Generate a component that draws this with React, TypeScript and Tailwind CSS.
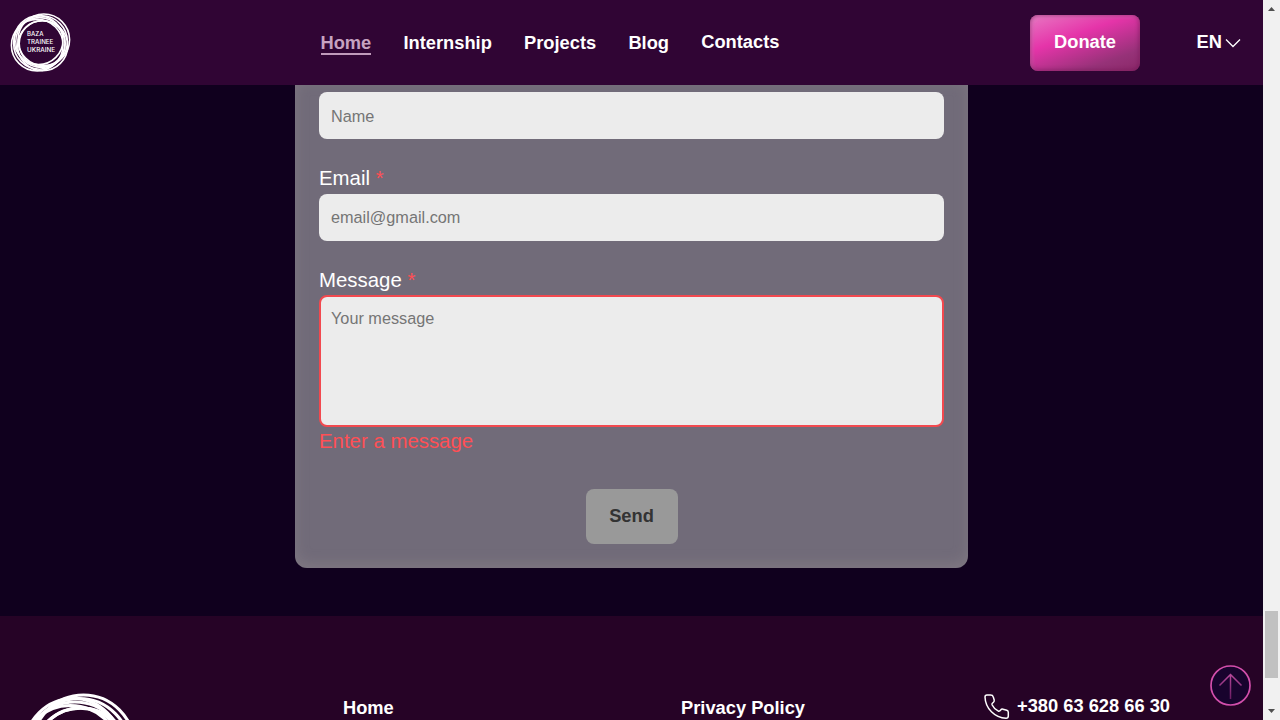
import type { ReactNode } from "react";

const rings = [
  { cx: 55.4, cy: 45.6, r: 42.3 },
  { cx: 51.8, cy: 48.5, r: 42.3 },
  { cx: 48.2, cy: 51.5, r: 42.3 },
  { cx: 44.6, cy: 54.4, r: 42.3 },
  { cx: 53.6, cy: 55.2, r: 41 },
  { cx: 52.6, cy: 51.8, r: 37.5 },
  { cx: 46.8, cy: 46.2, r: 40 },
];

function Logo({ className, wordmark = true }: { className: string; wordmark?: boolean }) {
  return (
    <svg viewBox="0 0 100 100" className={className} fill="none" stroke="#fff">
      {rings.map((ring, i) => (
        <circle key={i} {...ring} strokeWidth="2.6" />
      ))}
      {wordmark && (
        <g fill="#fff" stroke="none" fontSize="10" fontWeight="500" fontFamily="Inter, sans-serif">
          <text x="28" y="40" textLength="27" lengthAdjust="spacingAndGlyphs">BAZA</text>
          <text x="28" y="53" textLength="43" lengthAdjust="spacingAndGlyphs">TRAINEE</text>
          <text x="28" y="66" textLength="46" lengthAdjust="spacingAndGlyphs">UKRAINE</text>
        </g>
      )}
    </svg>
  );
}

function Label({ children }: { children: ReactNode }) {
  return (
    <label className="block h-[31px] text-[20.4px] leading-[31px] text-white">
      {children} <span className="text-[#ff4f55]">*</span>
    </label>
  );
}

function Header() {
  return (
    <header className="flex h-[85px] shrink-0 items-center bg-[#300534] text-[18.3px] font-bold text-white">
      <Logo className="ml-[10px] h-[61px] w-[61px] shrink-0" />
      <nav className="ml-[249.5px] flex w-[600.5px] gap-[32.2px] pt-[2px] leading-[22px]">
        <a className="h-[23px] border-b-2 border-[#c09bbb] text-[#c7a3c1]">Home</a>
        <a>Internship</a>
        <a>Projects</a>
        <a>Blog</a>
        <a className="-mt-px">Contacts</a>
      </nav>
      <button className="ml-[109px] h-[56px] w-[110px] shrink-0 rounded-[8px] bg-[linear-gradient(160deg,#e878c3_0%,#e534a9_38%,#963278_78%,#8a2868_100%)] pb-[2px] shadow-[inset_0_0_4px_1px_rgba(110,15,80,0.6),inset_2px_2px_4px_rgba(255,180,230,0.4)]">
        Donate
      </button>
      <div className="ml-[56.5px] flex items-center gap-[3.5px] pb-[2px]">
        EN
        <svg className="mt-[2px] h-[10px] w-[16px]" viewBox="0 0 16 10" fill="none" stroke="#fff" strokeWidth="1.3">
          <path d="M1 1.5 8 8.5l7-7" />
        </svg>
      </div>
    </header>
  );
}

function ContactForm() {
  return (
    <main className="flex h-[531px] shrink-0 justify-center bg-[#10001e]">
      <form className="flex h-[483px] w-[673px] flex-col rounded-b-[12px] bg-[#716b79] px-[24px] pt-[7px] shadow-[inset_0_-4px_14px_rgba(150,140,145,0.4)]">
        <input
          placeholder="Name"
          className="h-[47px] w-full shrink-0 rounded-[8px] bg-[#ececec] px-[12px] pt-[2px] text-[16.25px] placeholder:text-[#757575]"
        />
        <div className="mt-[24px]">
          <Label>Email</Label>
          <input
            placeholder="email@gmail.com"
            className="block h-[47px] w-full rounded-[8px] bg-[#ececec] px-[12px] text-[16.25px] placeholder:text-[#757575]"
          />
        </div>
        <div className="mt-[24px]">
          <Label>Message</Label>
          <textarea
            placeholder="Your message"
            className="-mt-px block h-[132px] w-full resize-none rounded-[8px] border-2 border-[#f2494f] bg-[#ececec] px-[10px] pt-[9px] text-[16.25px] leading-[24px] placeholder:text-[#757575]"
          />
          <p className="h-[30px] text-[20.4px] leading-[28px] text-[#ff4f55]">Enter a message</p>
        </div>
        <button className="mt-[32px] h-[55px] w-[92px] shrink-0 self-center rounded-[8px] bg-[#999] pb-[2px] text-[18.3px] font-bold text-[#333]">
          Send
        </button>
      </form>
    </main>
  );
}

function Footer() {
  return (
    <footer className="relative flex h-[104px] overflow-hidden bg-[#260326] text-[18.3px] font-bold text-white">
      <Logo wordmark={false} className="ml-[17px] mt-[75px] h-[120px] w-[120px] shrink-0" />
      <a className="ml-[206px] mt-[78px] w-[338px]">Home</a>
      <a className="mt-[78px] w-[302px]">Privacy Policy</a>
      <a className="mt-[76px] flex items-start gap-[7px]">
        <svg className="mt-[1px] h-[27px] w-[27px]" viewBox="0 0 27 27" fill="none" stroke="#fff" strokeWidth="1.5" strokeLinejoin="round">
          <path d="M2 4Q2 2 4 2H7.5Q9.7 2 10.2 3.8L11.2 7Q11.5 8.4 10.3 9.4Q8.6 10.4 9 11.8Q11 16 15.4 18.2Q16.8 18.5 17.6 17.2Q18.5 15.8 20 16.2L23.8 17.2Q25.3 17.7 25.3 19.2V23Q25.3 25.3 23 25.3C11.8 24.8 2.4 15.6 2 4Z" />
        </svg>
        +380 63 628 66 30
      </a>
      <button className="absolute left-[1210px] top-[49px] h-[41px] w-[41px]">
        <svg viewBox="0 0 41 41" fill="none">
          <defs>
            <linearGradient id="arrow" gradientUnits="userSpaceOnUse" x1="20" y1="9" x2="20" y2="35">
              <stop stopColor="#b84a9c" />
              <stop offset="1" stopColor="#66195f" />
            </linearGradient>
          </defs>
          <circle cx="20.5" cy="20.5" r="19.5" fill="#18032d" stroke="#d34fac" strokeWidth="1.7" />
          <path d="M20.5 34V9.5M9.5 20.5l11-11 11 11" stroke="url(#arrow)" strokeWidth="1.5" />
        </svg>
      </button>
    </footer>
  );
}

function Scrollbar() {
  return (
    <div className="flex h-full w-[17px] shrink-0 flex-col items-center bg-[#f1f1f1]">
      <svg className="mt-[7px] h-[4px] w-[7px]" viewBox="0 0 7 4" fill="#505050"><path d="M3.5 0 7 4H0Z" /></svg>
      <div className="mt-[600px] h-[67px] w-[13px] bg-[#c1c1c1]" />
      <svg className="mt-[31px] h-[4px] w-[7px]" viewBox="0 0 7 4" fill="#505050"><path d="M3.5 4 7 0H0Z" /></svg>
    </div>
  );
}

export default function App() {
  return (
    <div className="flex h-[720px] w-[1280px] overflow-hidden font-['Liberation_Sans',Arial,sans-serif]">
      <div className="flex w-[1263px] shrink-0 flex-col">
        <Header />
        <ContactForm />
        <Footer />
      </div>
      <Scrollbar />
    </div>
  );
}
